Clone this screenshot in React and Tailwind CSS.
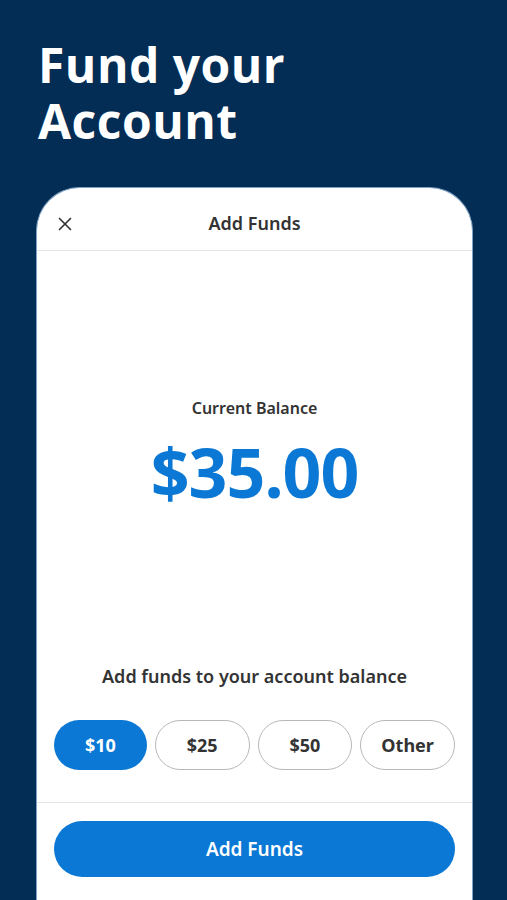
import { X } from "lucide-react";

const amounts = ["$10", "$25", "$50", "Other"];

export default function App() {
  const selected = "$10";
  return (
    <div className="flex h-[900px] w-full flex-col overflow-hidden bg-[#032d54] font-['Noto_Sans',sans-serif]">
      <h1 className="px-[38px] pt-[37px] font-['Open_Sans',sans-serif] text-[48px] font-bold leading-[56px] tracking-[0.5px] text-white">
        <span className="block">Fund your</span>
        <span className="block">Account</span>
      </h1>

      <div className="ml-[36px] mr-[34px] mt-[38px] flex flex-1 flex-col rounded-t-[44px] border border-b-0 border-[#7fa1c4] bg-white">
        <div className="relative flex h-[63px] items-center justify-center border-b border-[#e4e4e4] pt-[8px]">
          <button className="absolute left-[17px] top-[25px] text-[#333]">
            <X size={22} strokeWidth={1.8} />
          </button>
          <span className="text-[18px] font-semibold leading-[24px] text-[#333]">Add Funds</span>
        </div>

        <div className="flex flex-col items-center pt-[146px]">
          <span className="text-[16px] font-semibold leading-[22px] text-[#333]">Current Balance</span>
          <span className="mt-[15px] text-[68px] font-bold leading-[76px] tracking-[-1px] text-[#0a78d4]">
            $35.00
          </span>
        </div>

        <div className="mt-[153px] flex flex-col items-center">
          <span className="text-[18px] font-semibold leading-[26px] text-[#333]">
            Add funds to your account balance
          </span>
        </div>

        <div className="mt-[31px] flex gap-[8px] px-[17px]">
          {amounts.map((a) => (
            <button
              key={a}
              className={
                a === selected
                  ? "h-[50px] flex-1 rounded-full bg-[#0a78d4] text-[18px] font-bold text-white"
                  : "h-[50px] flex-1 rounded-full border border-[#b8b8b8] bg-white text-[18px] font-bold text-[#333]"
              }
            >
              {a}
            </button>
          ))}
        </div>

        <div className="mt-[32px] border-t border-[#e4e4e4] px-[17px] pt-[18px]">
          <button className="h-[56px] w-full rounded-full bg-[#0a78d4] text-[19px] font-semibold text-white">
            Add Funds
          </button>
        </div>
      </div>
    </div>
  );
}
